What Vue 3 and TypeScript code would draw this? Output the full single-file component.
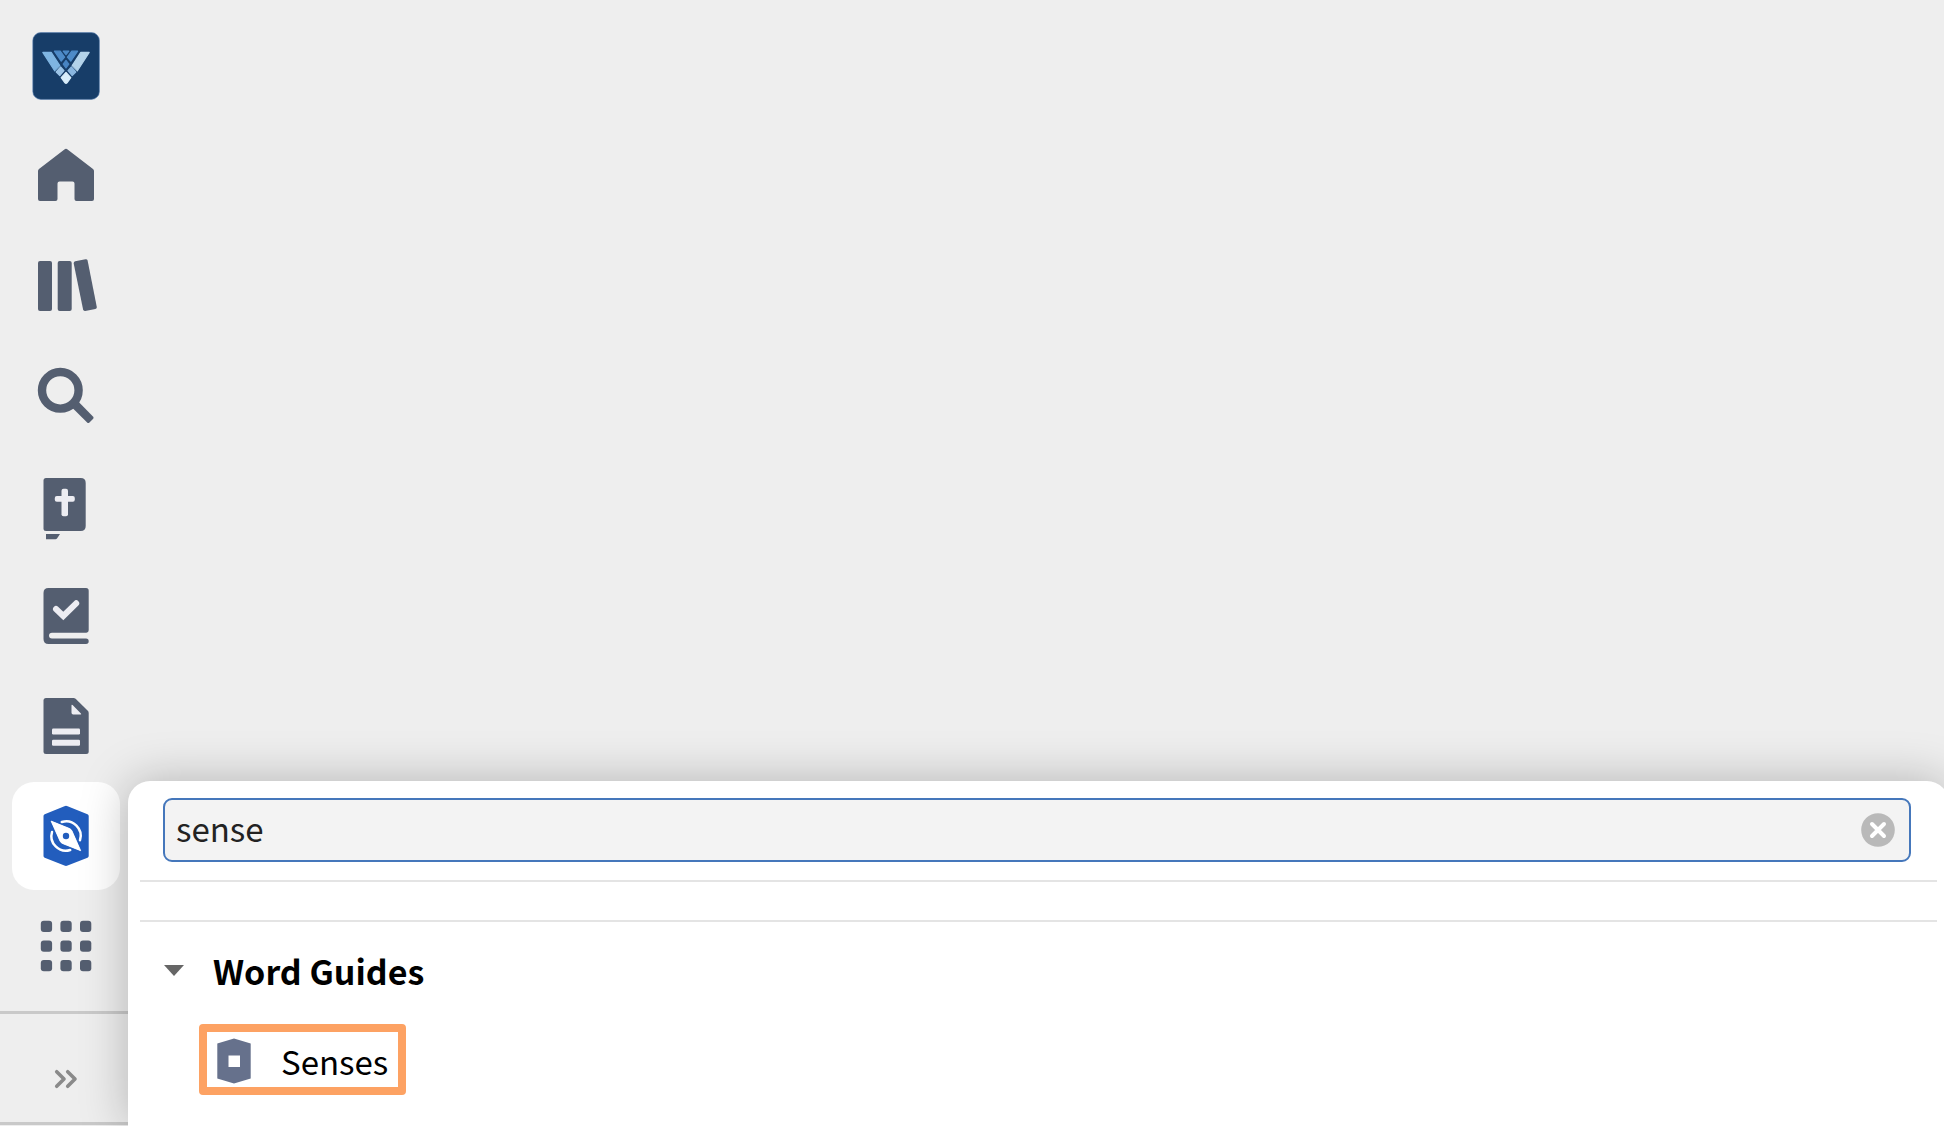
<script setup lang="ts">
import { ref } from 'vue'

interface NavItem {
  id: string
  label: string
}

const items: NavItem[] = [
  { id: 'logo', label: 'Dashboard' },
  { id: 'home', label: 'Home' },
  { id: 'library', label: 'Library' },
  { id: 'search', label: 'Search' },
  { id: 'bible', label: 'Bible' },
  { id: 'plans', label: 'Reading plans' },
  { id: 'documents', label: 'Documents' },
  { id: 'guides', label: 'Guides' },
  { id: 'tools', label: 'Tools' },
]

const active = ref('guides')
const query = ref('sense')
const expanded = ref(true)
const dots = [-25.2, -5.6, 14]
</script>

<template>
  <div class="shell">
    <aside class="sidebar">
      <nav class="nav">
        <button
          v-for="item in items"
          :key="item.id"
          type="button"
          class="nav-item"
          :class="{ active: item.id === active }"
          :aria-label="item.label"
          @click="active = item.id"
        >
          <svg class="icon" viewBox="-36 -36 72 72" aria-hidden="true">
            <g v-if="item.id === 'logo'">
              <rect x="-33.2" y="-33.4" width="66.6" height="66.8" rx="8" fill="#173d68" stroke="#5b82b4" stroke-width=".6" />
              <g stroke-width="1.2" stroke-linejoin="round">
                <path d="M-23.2-13.6H-14.8L-6.200-.400-11.400 4.800Z" fill="#7fb5e2" stroke="#7fb5e2" />
                <path d="M23.200-13.600H14.800L6.200-.400 11.400 4.800Z" fill="#b4d3ea" stroke="#b4d3ea" />
                <path d="M-11.600-14.800H-5.800L-1.400-9-4.800-4.800Z" fill="#4e8bc8" stroke="#4e8bc8" />
                <path d="M11.600-14.800H5.800L1.400-9 4.800-4.800Z" fill="#4e8bc8" stroke="#4e8bc8" />
                <path d="M-2.800-14.800H2.800L0-11.400Z" fill="#4e8bc8" stroke="#4e8bc8" />
                <path d="M0-5.600 2.800-1.800 0 2-2.800-1.800Z" fill="#4884c2" stroke="#4884c2" />
                <path d="M-5.400 1-2 4.600-6.200 9.600-9.800 6Z" fill="#9dc5e8" stroke="#9dc5e8" />
                <path d="M5.400 1 2 4.600 6.200 9.600 9.800 6Z" fill="#8ab6df" stroke="#8ab6df" />
                <path d="M0 6.400 4.800 11.600 1 16.800Q0 17.800-1 16.800L-4.800 11.600Z" fill="#d9eefb" stroke="#d9eefb" />
              </g>
            </g>
            <path
              v-else-if="item.id === 'home'"
              d="M-1.6-26.6Q0-27.8 1.6-26.6L27-7Q28-6.2 28-5V23Q28 25 26 25H10.5Q8.500 25 8.500 23V7.500Q8.500 5.500 6.500 5.500H-6.500Q-8.500 5.500-8.500 7.500V23Q-8.500 25-10.500 25H-26Q-28 25-28 23V-5Q-28-6.200-27-7Z"
            />
            <g v-else-if="item.id === 'library'">
              <rect x="-28" y="-25" width="14" height="50" rx="2" />
              <rect x="-8.3" y="-25" width="14" height="50" rx="2" />
              <path d="M9.200-24.700 19.500-26.800Q21.200-27 21.600-25.400L30.800 21Q31 22.600 29.400 23L19.200 24.900Q17.500 25.100 17.100 23.500L7.700-22.600Q7.500-24.300 9.200-24.700Z" />
            </g>
            <g v-else-if="item.id === 'search'">
              <circle cx="-5.700" cy="-5.700" r="18.300" fill="none" stroke="#545e70" stroke-width="8.400" />
              <path d="M12.500 5.800 27.200 20.800Q28 21.800 27.200 22.700L23.200 26.700Q22.300 27.500 21.400 26.700L6 11.500Z" />
            </g>
            <g v-else-if="item.id === 'bible'">
              <path d="M-20-28H14.700Q19.700-28 19.700-23V20Q19.700 25 14.700 25H-20Q-22.500 25-22.500 22.500V-25.500Q-22.500-28-20-28Z" />
              <path d="M-20 28H-6L-9 32.500Q-9.600 33.300-10.500 33.300H-20Z" />
              <rect x="-4.500" y="-17.200" width="6.500" height="27.500" rx="2" fill="#ededf2" />
              <rect x="-11.200" y="-10" width="20" height="5.800" rx="2" fill="#ededf2" />
            </g>
            <g v-else-if="item.id === 'plans'">
              <path d="M-17.500-28H20Q22.700-28 22.700-25.300V14.300Q22.700 16.700 20.300 16.700H-14Q-17 16.700-17 19.600T-14 22.500H20Q22.700 22.500 22.700 25.200T20 28H-17.500Q-22.500 28-22.500 23V-23Q-22.500-28-17.500-28Z" />
              <path d="M-10-7-2.700 0 10.200-12.700" fill="none" stroke="#ededf2" stroke-width="6" stroke-linecap="round" />
            </g>
            <g v-else-if="item.id === 'documents'">
              <path d="M-20-28H7.500Q8.700-28 9.600-27.200L21.800-15.200Q22.700-14.300 22.700-13V25.500Q22.700 28 20.200 28H-20Q-22.500 28-22.500 25.500V-25.500Q-22.500-28-20-28Z" />
              <path d="M5.500-20.500Q5.500-22 6.600-20.900L14.900-12.600Q15.800-11.500 14.500-11.500H7.200Q5.500-11.500 5.500-13.200Z" fill="#ededf2" />
              <rect x="-14" y="2.500" width="28" height="6" rx="1.200" fill="#ededf2" />
              <rect x="-14" y="13.700" width="28" height="6" rx="1.200" fill="#ededf2" />
            </g>
            <g v-else-if="item.id === 'guides'">
              <path d="M-1.600-29.800Q0-30.600 1.600-29.800L21.500-21.800Q22.700-21.200 22.700-20V20Q22.700 21.200 21.500 21.800L1.600 29.600Q0 30.200-1.600 29.600L-21.300 21.800Q-22.500 21.200-22.500 20V-20Q-22.500-21.200-21.300-21.800Z" fill="#225dbd" />
              <path d="M-4.200-14A14.500 14.500 0 0 1 14 4.200M-14-4A14.500 14.500 0 0 0 4.200 14" fill="none" stroke="#fff" stroke-width="2.500" stroke-linecap="round" />
              <path d="M-14.900-14.900 3.500-7.500Q5.200-6.800 6-5L14.700 14.700-3.500 7.500Q-5.200 6.800-6 5Z" fill="#fff" stroke="#225dbd" stroke-width="3" paint-order="stroke" />
              <path d="M-14.900-14.900 3.500-7.500Q5.200-6.800 6-5L14.700 14.700-3.500 7.500Q-5.200 6.800-6 5Z" fill="#fff" stroke="#fff" stroke-width=".8" stroke-linejoin="round" />
              <circle r="3.200" fill="#225dbd" />
            </g>
            <g v-else>
              <template v-for="y in dots" :key="y">
                <rect v-for="x in dots" :key="x" :x="x" :y="y" width="11.300" height="11.300" rx="3" />
              </template>
            </g>
          </svg>
        </button>
      </nav>
      <button type="button" class="expand" aria-label="Expand sidebar">
        <svg class="icon" viewBox="-36 -36 72 72" aria-hidden="true">
          <path d="M-9.300-7.300-2 0-9.300 7.300M1.700-7.300 9 0 1.700 7.300" fill="none" stroke="#8a8a8a" stroke-width="3.600" stroke-linecap="round" stroke-linejoin="round" />
        </svg>
      </button>
    </aside>

    <main class="panel">
      <div class="search">
        <input v-model="query" class="field" type="text" aria-label="Search guides" />
        <button type="button" class="clear" aria-label="Clear search" @click="query = ''">
          <svg viewBox="-17 -17 34 34" aria-hidden="true">
            <circle r="16.800" fill="#b9b9b9" />
            <path d="M-6-6 6 6M6-6-6 6" stroke="#fff" stroke-width="4" stroke-linecap="round" />
          </svg>
        </button>
      </div>
      <div class="spacer"></div>
      <section>
        <h2 class="heading">
          <button type="button" class="toggle" :aria-expanded="expanded" @click="expanded = !expanded">
            <svg class="caret" viewBox="0 0 20 12" aria-hidden="true"><path d="M0 0H20L10 11Z" fill="#666" /></svg>
            <span class="title">Word Guides</span>
          </button>
        </h2>
        <a v-if="expanded" href="#senses" class="result">
          <svg class="guide" viewBox="0 0 34 46" aria-hidden="true">
            <path d="M.300 5.500 17 .500 33.700 5.500V40.500L17 45.500 .300 40.500ZM11.500 17.500V29H23V17.500Z" fill="#66718c" fill-rule="evenodd" />
          </svg>
          <span>Senses</span>
        </a>
      </section>
    </main>
  </div>
</template>

<style>
body {
  margin: 0;
  background: #eee;
}
</style>

<style scoped>
.shell {
  display: flex;
  min-height: 100vh;
  overflow: hidden;
  background: #eee;
  color: #000;
  font-family: "Noto Sans CJK SC", "Noto Sans", sans-serif;
  font-size: 33px;
}

button {
  margin: 0;
  padding: 0;
  border: 0;
  background: none;
  color: inherit;
  font: inherit;
  cursor: pointer;
}

svg {
  display: block;
}

.sidebar {
  display: flex;
  flex: none;
  flex-direction: column;
  width: 128px;
}

.nav {
  display: flex;
  flex-direction: column;
  gap: 2px;
  padding: 12px 8px 11px 12px;
}

.nav-item {
  display: flex;
  align-items: center;
  justify-content: center;
  height: 108px;
  border-radius: 22px;
}

.nav-item.active {
  background: #fff;
}

.icon {
  width: 72px;
  height: 72px;
  fill: #545e70;
}

.expand {
  display: flex;
  align-items: center;
  justify-content: center;
  height: 114px;
  padding: 22px 0 0 4px;
  box-sizing: border-box;
  border-top: 3px solid #c9c9c9;
  border-bottom: 3px solid #c9c9c9;
}

.panel {
  position: relative;
  flex: 1;
  align-self: flex-end;
  box-sizing: border-box;
  margin-right: -5px;
  padding: 17px 12px 31px;
  border-radius: 22px 22px 0 0;
  background: #fff;
  box-shadow: 0 0 48px rgba(0, 0, 0, 0.25);
}

.search {
  display: flex;
  align-items: center;
  height: 64px;
  margin: 0 26px 18px 23px;
  box-sizing: border-box;
  padding-right: 14px;
  border: 2px solid #4577bb;
  border-radius: 9px;
  background: #f3f3f3;
}

.field {
  flex: 1;
  min-width: 0;
  height: 60px;
  padding: 0 0 4px 11px;
  box-sizing: border-box;
  border: 0;
  outline: 0;
  background: none;
  color: #222;
  font: inherit;
}

.clear {
  width: 34px;
  height: 34px;
}

.spacer {
  height: 38px;
  border-top: 2px solid #e4e4e4;
  border-bottom: 2px solid #e4e4e4;
}

.heading {
  margin: 0 0 4px;
  font-size: 34px;
  font-weight: 700;
}

.toggle {
  display: flex;
  align-items: center;
  gap: 29px;
  height: 98px;
  padding-left: 24px;
}

.title {
  padding-bottom: 2px;
}

.caret {
  width: 20px;
  height: 12px;
}

.result {
  display: flex;
  align-items: center;
  gap: 30px;
  width: fit-content;
  height: 71px;
  margin-left: 59px;
  padding: 2px 10px 0 10px;
  box-sizing: border-box;
  border: 8px solid #fda263;
  border-radius: 4px;
  color: inherit;
  text-decoration: none;
}

.guide {
  width: 34px;
  height: 46px;
}
</style>
